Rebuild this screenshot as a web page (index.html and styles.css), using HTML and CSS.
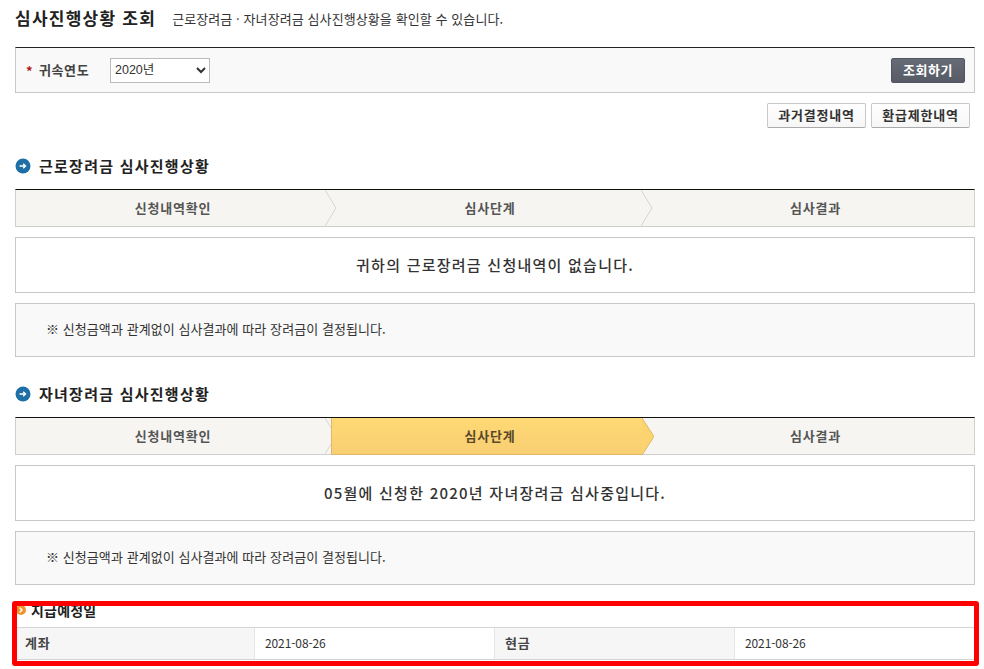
FILE: index.html
```html
<!DOCTYPE html>
<html lang="ko">
<head>
<meta charset="utf-8">
<title>심사진행상황 조회</title>
<link rel="stylesheet" href="styles.css">
</head>
<body>
<main class="page">
  <header class="title-row">
    <h1 class="title">심사진행상황 조회</h1>
    <p class="subtitle">근로장려금 · 자녀장려금 심사진행상황을 확인할 수 있습니다.</p>
  </header>

  <section class="search">
    <span class="req">*</span>
    <label class="search-label" for="year">귀속연도</label>
    <select class="year" id="year"><option>2020년</option></select>
    <button class="btn-dark" type="button">조회하기</button>
  </section>

  <div class="actions">
    <button class="btn-light" type="button">과거결정내역</button>
    <button class="btn-light" type="button">환급제한내역</button>
  </div>

  <section class="block first">
    <h2 class="heading">
      <svg class="bullet" viewBox="0 0 16 16" aria-hidden="true"><circle cx="8" cy="8" r="7.5" fill="#1d6fa5"/><path d="M4.5 8h6M8.2 5.8 10.5 8l-2.3 2.2" fill="none" stroke="#fff" stroke-width="1.4"/></svg>
      근로장려금 심사진행상황
    </h2>
    <div class="steps">
      <div class="step s1">신청내역확인<svg class="chev" viewBox="0 0 12 36" preserveAspectRatio="none" aria-hidden="true"><path d="M0 0 11 18 0 36" fill="none" stroke="#d6d6d0"/></svg></div>
      <div class="step s2">심사단계<svg class="chev" viewBox="0 0 12 36" preserveAspectRatio="none" aria-hidden="true"><path d="M0 0 11 18 0 36" fill="none" stroke="#d6d6d0"/></svg></div>
      <div class="step s3">심사결과</div>
    </div>
    <div class="message">귀하의 근로장려금 신청내역이 없습니다.</div>
    <div class="note">※ 신청금액과 관계없이 심사결과에 따라 장려금이 결정됩니다.</div>
  </section>

  <section class="block second">
    <h2 class="heading">
      <svg class="bullet" viewBox="0 0 16 16" aria-hidden="true"><circle cx="8" cy="8" r="7.5" fill="#1d6fa5"/><path d="M4.5 8h6M8.2 5.8 10.5 8l-2.3 2.2" fill="none" stroke="#fff" stroke-width="1.4"/></svg>
      자녀장려금 심사진행상황
    </h2>
    <div class="steps">
      <div class="step s1">신청내역확인<svg class="chev" viewBox="0 0 12 36" preserveAspectRatio="none" aria-hidden="true"><path d="M0 0 11 18 0 36" fill="none" stroke="#d6d6d0"/></svg></div>
      <div class="step s2 active">심사단계<svg class="arrow" viewBox="0 0 12 37" preserveAspectRatio="none" aria-hidden="true"><path d="M0 0 12 18.5 0 37Z" fill="#fbd46f"/><path d="M0 0 12 18.5 0 37" fill="none" stroke="#e0b868"/></svg></div>
      <div class="step s3">심사결과</div>
    </div>
    <div class="message">05월에 신청한 2020년 자녀장려금 심사중입니다.</div>
    <div class="note">※ 신청금액과 관계없이 심사결과에 따라 장려금이 결정됩니다.</div>
  </section>

  <section class="pay">
    <h3 class="pay-title">
      <svg class="pay-bullet" viewBox="0 0 10 10" aria-hidden="true"><circle cx="5" cy="5" r="5" fill="#f0932b"/><path d="M3.6 2.6 6 5 3.6 7.4" fill="none" stroke="#fff" stroke-width="1.4"/></svg>
      지급예정일
    </h3>
    <div class="pay-table">
      <div class="th">계좌</div><div class="td">2021-08-26</div>
      <div class="th">현금</div><div class="td">2021-08-26</div>
    </div>
  </section>
</main>
<div class="highlight"></div>
</body>
</html>
```
FILE: styles.css
```css
* { box-sizing: border-box; }
html, body { margin: 0; padding: 0; background: #fff; }
body {
  font-family: "Noto Sans CJK KR", "Noto Sans", sans-serif;
  color: #333;
  height: 669px;
  overflow: hidden;
  position: relative;
}
.page { width: 960px; margin-left: 15px; }

.title-row { display: flex; align-items: center; height: 47px; padding-bottom: 12px; }
.title { margin: 0; font-size: 17px; font-weight: 700; color: #222; line-height: 20px; letter-spacing: 1.25px; }
.subtitle { margin: 2px 0 0 16px; font-size: 13px; font-weight: 400; color: #333; line-height: 16px; letter-spacing: 0.09px; }

.search {
  display: flex; align-items: center;
  height: 46px; padding: 0 9px 0 10px;
  background: #f9f9f9;
  border: 1px solid #c8c8c8; border-top-color: #222;
}
.req { color: #b01818; font-size: 13px; font-weight: 700; width: 13px; }
.search-label { font-size: 13px; font-weight: 700; color: #444; letter-spacing: 0.6px; width: 71px; padding-bottom: 2px; }
.year {
  width: 100px; height: 25px; font-family: "Liberation Sans", "Noto Sans CJK KR", sans-serif; font-size: 12.5px; color: #333;
  border: 1px solid #bbb; background: #fff; padding-left: 0;
}
.btn-dark {
  margin-left: auto; width: 74px; height: 25px;
  border: 1px solid #50555f; border-radius: 2px;
  background: linear-gradient(#666b76, #565b66);
  color: #fff; font: 700 13px "Noto Sans CJK KR", sans-serif; letter-spacing: 0.6px; padding: 0 0 2px;
}

.actions { display: flex; justify-content: flex-end; gap: 5px; margin-top: 10px; padding-right: 5px; }
.btn-light {
  width: 99px; height: 25px;
  border: 1px solid #c8c8c8; border-bottom-color: #aaa; border-radius: 2px;
  background: linear-gradient(#fff, #f6f6f6);
  color: #333; font: 700 13px "Noto Sans CJK KR", sans-serif; letter-spacing: 0.8px; padding: 0 0 2px;
}

.block.first { margin-top: 28px; }
.block.second { margin-top: 27px; }
.heading {
  display: flex; align-items: center; gap: 8px;
  margin: 0; height: 20px; padding-bottom: 2px;
  font-size: 15px; font-weight: 700; color: #222; letter-spacing: 1.25px;
}
.bullet { width: 16px; height: 16px; flex: none; margin-top: 2px; }

.steps {
  display: flex; margin-top: 13px; height: 38px;
  background: #f6f5f1;
  border: 1px solid #cfcfcf; border-top: 1px solid #111;
}
.step {
  position: relative; display: flex; align-items: center; justify-content: center;
  padding-bottom: 2px;
  font-size: 13px; font-weight: 700; color: #555; letter-spacing: 0.8px;
}
.s1 { width: 310px; padding-left: 4px; }
.s2 { width: 316px; padding-left: 12px; }
.s3 { flex: 1; padding-left: 15px; }
.chev { position: absolute; right: -11px; top: 0; width: 12px; height: 100%; }
.active {
  width: 311px; margin-left: 5px; padding-left: 7px;
  background: linear-gradient(#ffd975, #f8ce72);
  box-shadow: 0 1px 0 #e0b868, inset 1px 0 0 #e0b868;
  color: #5a4a2a;
}
.arrow { position: absolute; right: -12px; top: 0; width: 12px; height: calc(100% + 1px); }

.message {
  display: flex; align-items: center; justify-content: center;
  height: 56px; margin-top: 10px; padding-bottom: 2px;
  border: 1px solid #c8c8c8;
  font-size: 15px; font-weight: 500; color: #333; letter-spacing: 1.25px;
}
.note {
  display: flex; align-items: center;
  height: 54px; margin-top: 10px; padding: 0 0 4px 30px;
  background: #f9f9f9; border: 1px solid #c8c8c8;
  font-size: 13px; color: #333; letter-spacing: 0.07px;
}

.pay { margin-top: 17px; }
.pay-title {
  display: flex; align-items: center; gap: 5px;
  margin: 0 0 0 1px; height: 25px; padding-bottom: 10px;
  font-size: 14px; font-weight: 700; color: #222; letter-spacing: 0.2px;
}
.pay-bullet { width: 10px; height: 10px; flex: none; }
.pay-table {
  display: grid; grid-template-columns: 240px 240px 240px 240px;
  height: 33px;
  border-top: 1px solid #d4d4d4; border-bottom: 1px solid #d4d4d4;
}
.th {
  display: flex; align-items: center; padding: 0 0 2px 10px;
  background: #f6f6f6; border-right: 1px solid #e6e6e6;
  font-size: 13px; font-weight: 700; color: #444; letter-spacing: 0.8px;
}
.td {
  display: flex; align-items: center; padding: 0 0 2px 10px;
  border-right: 1px solid #e6e6e6;
  font-size: 12px; color: #333; letter-spacing: -0.1px;
}
.td:last-child { border-right: 0; }

.highlight {
  position: absolute; left: 12px; top: 601px; width: 967px; height: 65px;
  border: 5px solid #f00; border-radius: 3px;
  pointer-events: none;
}
```
